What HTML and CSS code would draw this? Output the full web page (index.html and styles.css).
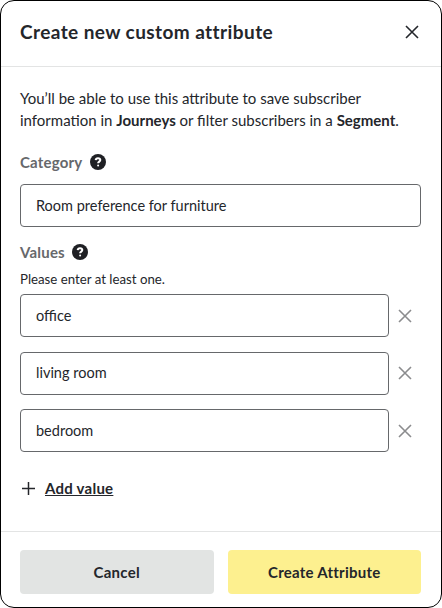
FILE: index.html
```html
<!DOCTYPE html>
<html lang="en">
<head>
    <meta charset="UTF-8">
    <meta name="viewport" content="width=device-width, initial-scale=1.0">
    <title>Create new custom attribute</title>
    <link rel="stylesheet" href="styles.css">
</head>
<body>
<div class="modal">
    <div class="modal-header">
        <h1>Create new custom attribute</h1>
        <svg class="close-icon" viewBox="0 0 16 16" aria-hidden="true"><path d="M2 2L14 14M14 2L2 14"/></svg>
    </div>
    <div class="modal-body">
        <p class="intro">You’ll be able to use this attribute to save subscriber information in <b>Journeys</b> or filter subscribers in a <b>Segment</b>.</p>
        <div class="field-label category-label">
            Category
            <svg class="help-icon" viewBox="0 0 16 16" aria-hidden="true"><circle cx="8" cy="8" r="8"/><path d="M5.7 6.2C5.8 4.9 6.8 4.2 8 4.2C9.3 4.2 10.3 5 10.3 6.1C10.3 7.6 8.1 7.7 8.1 9.3"/><circle class="dot" cx="8.1" cy="11.6" r="1"/></svg>
        </div>
        <div class="input-box">Room preference for furniture</div>
        <div class="field-label values-label">
            Values
            <svg class="help-icon" viewBox="0 0 16 16" aria-hidden="true"><circle cx="8" cy="8" r="8"/><path d="M5.7 6.2C5.8 4.9 6.8 4.2 8 4.2C9.3 4.2 10.3 5 10.3 6.1C10.3 7.6 8.1 7.7 8.1 9.3"/><circle class="dot" cx="8.1" cy="11.6" r="1"/></svg>
        </div>
        <div class="hint">Please enter at least one.</div>
        <div class="value-row">
            <div class="input-box">office</div>
            <svg class="remove-icon" viewBox="0 0 14 14" aria-hidden="true"><path d="M1 1L13 13M13 1L1 13"/></svg>
        </div>
        <div class="value-row">
            <div class="input-box">living room</div>
            <svg class="remove-icon" viewBox="0 0 14 14" aria-hidden="true"><path d="M1 1L13 13M13 1L1 13"/></svg>
        </div>
        <div class="value-row">
            <div class="input-box">bedroom</div>
            <svg class="remove-icon" viewBox="0 0 14 14" aria-hidden="true"><path d="M1 1L13 13M13 1L1 13"/></svg>
        </div>
        <div class="add-value">
            <svg class="plus-icon" viewBox="0 0 14 14" aria-hidden="true"><path d="M7 0V14M0 7H14"/></svg>
            <a href="#">Add value</a>
        </div>
    </div>
    <div class="modal-footer">
        <button class="btn btn-cancel">Cancel</button>
        <button class="btn btn-create">Create Attribute</button>
    </div>
</div>
</body>
</html>
```

FILE: styles.css
```css
body {
    margin: 0;
    background-color: #fff;
    font-family: "Lato", "Open Sans", sans-serif;
    color: #24262b;
}
.modal {
    width: 442px;
    height: 608px;
    box-sizing: border-box;
    border: 1px solid #000;
    border-radius: 14px;
    display: flex;
    flex-direction: column;
    overflow: hidden;
}
.modal-header {
    height: 66px;
    flex: none;
    box-sizing: border-box;
    border-bottom: 1px solid #e3e4e4;
    padding: 0 21px 4px 19px;
    display: flex;
    align-items: center;
    justify-content: space-between;
}
h1 {
    margin: 0;
    font-size: 19px;
    font-weight: 700;
    letter-spacing: 0.42px;
}
.close-icon {
    width: 16px;
    height: 16px;
    fill: none;
    stroke: #24262b;
    stroke-width: 1.6;
}
.modal-body {
    flex: 1;
    padding: 21px 20px 0 19px;
}
.intro {
    margin: 0;
    font-size: 15px;
    line-height: 21.5px;
}
.field-label {
    display: flex;
    align-items: center;
    gap: 8px;
    font-size: 15px;
    line-height: 20px;
    font-weight: 700;
    letter-spacing: 0.2px;
    color: #66686b;
}
.category-label {
    margin-top: 21px;
    margin-bottom: 12px;
}
.values-label {
    margin-top: 15px;
    margin-bottom: 8px;
    gap: 7px;
}
.help-icon {
    width: 16px;
    height: 16px;
    fill: #1f2024;
}
.help-icon path {
    fill: none;
    stroke: #fff;
    stroke-width: 2;
}
.help-icon .dot {
    fill: #fff;
}
.hint {
    font-size: 13.25px;
    line-height: 18px;
    margin-bottom: 6px;
}
.input-box {
    flex: 1;
    height: 43px;
    box-sizing: border-box;
    border: 1px solid #66686b;
    border-radius: 4px;
    padding: 0 15px 1px 15px;
    display: flex;
    align-items: center;
    font-size: 14.5px;
}
.value-row {
    display: flex;
    align-items: center;
    gap: 9px;
    margin-bottom: 14.5px;
    padding-right: 9px;
}
.remove-icon {
    width: 14px;
    height: 14px;
    flex: none;
    fill: none;
    stroke: #8b8c8e;
    stroke-width: 1.6;
}
.add-value {
    display: flex;
    align-items: center;
    gap: 10px;
    margin-top: 27px;
    padding-left: 2px;
}
.plus-icon {
    width: 13px;
    height: 13px;
    fill: none;
    stroke: #24262b;
    stroke-width: 1.6;
}
.add-value a {
    color: #24262b;
    font-size: 15px;
    font-weight: 700;
    letter-spacing: 0.25px;
}
.modal-footer {
    flex: none;
    border-top: 1px solid #e3e4e4;
    padding: 18px 20px 13px 19px;
    display: flex;
    gap: 14px;
}
.btn {
    flex: 1;
    height: 44px;
    border: none;
    border-radius: 4px;
    font-family: inherit;
    font-size: 15px;
    font-weight: 700;
    letter-spacing: 0.25px;
    color: #24262b;
}
.btn-cancel {
    background-color: #e2e4e3;
}
.btn-create {
    background-color: #fdf08f;
}
```
